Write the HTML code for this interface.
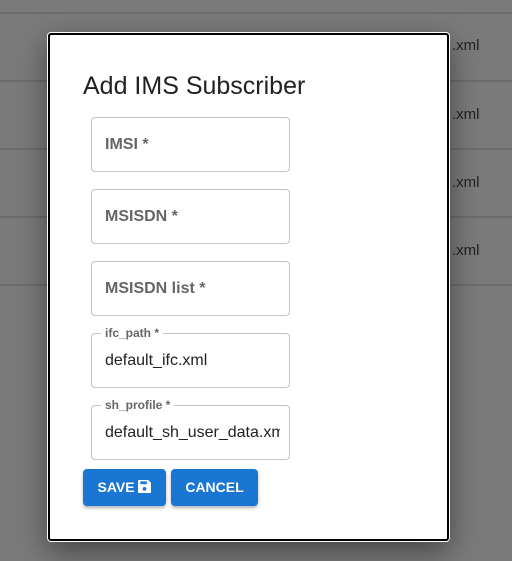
<!DOCTYPE html>
<html><head><style>
body{margin:0;width:512px;height:561px;overflow:hidden;background:#7a7a7a;font-family:"Liberation Sans",sans-serif;position:relative}
.ln{position:absolute;left:0;width:512px;height:2px;background:#6c6c6c}
.x{position:absolute;left:452px;font-size:15px;color:#222}
.dlg{position:absolute;left:48px;top:33px;width:397px;height:504px;background:#fff;border:2px solid #000;border-radius:3px;box-shadow:0 0 0 1px #fff,0 10px 30px rgba(0,0,0,.45)}
h1{position:absolute;left:33px;top:37px;margin:0;font-weight:normal;font-size:25px;color:#222}
.f{position:absolute;left:41px;width:197px;height:53px;border:1px solid #c4c4c4;border-radius:4px}
.f span{position:absolute;left:13px;top:18px;font-size:16px;font-weight:bold;color:#666}
.f .lg{position:absolute;left:9px;top:-8px;background:#fff;padding:0 4px;font-size:12px;font-weight:bold;color:#666}
.f .v{position:absolute;left:13px;top:18px;font-size:16px;color:#222;white-space:nowrap;overflow:hidden;width:175px}
.b{position:absolute;top:434px;height:37px;background:#1976d2;color:#fff;border-radius:4px;font-size:14px;font-weight:bold;letter-spacing:0;line-height:37px;text-align:center;box-shadow:0 2px 3px rgba(0,0,0,.3)}
</style></head><body>
<div class="ln" style="top:12px"></div><div class="ln" style="top:80px"></div><div class="ln" style="top:148px"></div><div class="ln" style="top:216px"></div><div class="ln" style="top:284px"></div>
<div class="x" style="top:37px">.xml</div><div class="x" style="top:106px">.xml</div><div class="x" style="top:174px">.xml</div><div class="x" style="top:242px">.xml</div>
<div class="dlg">
<h1>Add IMS Subscriber</h1>
<div class="f" style="top:82px"><span>IMSI *</span></div>
<div class="f" style="top:154px"><span>MSISDN *</span></div>
<div class="f" style="top:226px"><span>MSISDN list *</span></div>
<div class="f" style="top:298px"><div class="lg">ifc_path *</div><div class="v">default_ifc.xml</div></div>
<div class="f" style="top:370px"><div class="lg">sh_profile *</div><div class="v">default_sh_user_data.xml</div></div>
<div class="b" style="left:33px;width:83px">SAVE <svg width="13" height="13" viewBox="0 0 14 14" style="vertical-align:-1px"><path d="M0 1a1 1 0 0 1 1-1h10l3 3v10a1 1 0 0 1-1 1H1a1 1 0 0 1-1-1z" fill="#fff"/><rect x="2.5" y="1.5" width="7" height="3" fill="#1976d2"/><circle cx="7" cy="9.5" r="2" fill="#1976d2"/></svg></div>
<div class="b" style="left:121px;width:87px">CANCEL</div>
</div>
</body></html>
